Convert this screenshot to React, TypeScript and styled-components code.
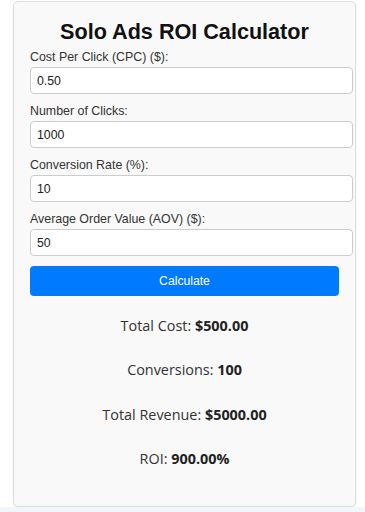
import { useState } from 'react';
import styled, { createGlobalStyle } from 'styled-components';

const GlobalStyle = createGlobalStyle`
    body {
        margin: 0;
        background-color: #f1f6fc;
    }
`;

const Page = styled.div`
    background-color: #ffffff;
    height: 507px;
    padding: 1px 9px 0 13px;
    box-sizing: border-box;
`;

const Card = styled.div`
    width: 343px;
    box-sizing: border-box;
    background-color: #f9f9f9;
    border: 1px solid #dddddd;
    border-radius: 5px;
    box-shadow: 0 1px 2px rgba(0, 0, 0, 0.08);
    padding: 17px 16px 37px;
`;

const Title = styled.h1`
    margin: 0 0 5px;
    font-family: 'Liberation Sans', Arial, sans-serif;
    font-size: 21.6px;
    line-height: 26px;
    font-weight: 700;
    color: #111;
    text-align: center;
`;

const Field = styled.div`
    display: flex;
    flex-direction: column;
    row-gap: 2px;
    margin-bottom: 10px;
`;

const Label = styled.label`
    font-family: 'Liberation Sans', Arial, sans-serif;
    font-size: 12.4px;
    line-height: 15px;
    color: #333;
`;

const Input = styled.input`
    box-sizing: content-box;
    width: 100%;
    height: 15px;
    padding: 5px 6px;
    margin: 0;
    border: 1px solid #cccccc;
    border-radius: 4px;
    background-color: #ffffff;
    font-family: 'Liberation Sans', Arial, sans-serif;
    font-size: 12.3px;
    color: #222;
    outline: none;
`;

const Button = styled.button`
    display: block;
    width: 100%;
    height: 30px;
    margin: 0;
    border: none;
    border-radius: 4px;
    background-color: #007bff;
    color: #ffffff;
    font-family: 'Liberation Sans', Arial, sans-serif;
    font-size: 12.2px;
    cursor: pointer;
`;

const Results = styled.div`
    display: flex;
    flex-direction: column;
    row-gap: 24.4px;
    margin-top: 20px;
`;

const ResultLine = styled.p`
    margin: 0;
    font-family: 'Open Sans', 'Noto Sans', sans-serif;
    font-size: 14.4px;
    line-height: 20px;
    color: #333;
    text-align: center;
`;

const Value = styled.strong`
    font-weight: 700;
    color: #222;
`;

const fields = [
    { key: 'cpc', label: 'Cost Per Click (CPC) ($):', initial: '0.50' },
    { key: 'clicks', label: 'Number of Clicks:', initial: '1000' },
    { key: 'rate', label: 'Conversion Rate (%):', initial: '10' },
    { key: 'aov', label: 'Average Order Value (AOV) ($):', initial: '50' },
];

const App = () => {
    const [values, setValues] = useState<Record<string, string>>(
        Object.fromEntries(fields.map((f) => [f.key, f.initial]))
    );

    const calc = (v: Record<string, string>) => {
        const cost = parseFloat(v.cpc) * parseFloat(v.clicks);
        const conversions = (parseFloat(v.clicks) * parseFloat(v.rate)) / 100;
        const revenue = conversions * parseFloat(v.aov);
        const roi = ((revenue - cost) / cost) * 100;
        return { cost, conversions, revenue, roi };
    };

    const [result, setResult] = useState(() => calc(values));

    return (
        <>
            <GlobalStyle />
            <Page>
                <Card>
                    <Title>Solo Ads ROI Calculator</Title>
                    {fields.map((f) => (
                        <Field key={f.key}>
                            <Label htmlFor={f.key}>{f.label}</Label>
                            <Input
                                id={f.key}
                                type="number"
                                value={values[f.key]}
                                onChange={(e) => setValues({ ...values, [f.key]: e.target.value })}
                            />
                        </Field>
                    ))}
                    <Button onClick={() => setResult(calc(values))}>Calculate</Button>
                    <Results>
                        <ResultLine>
                            Total Cost: <Value>${result.cost.toFixed(2)}</Value>
                        </ResultLine>
                        <ResultLine>
                            Conversions: <Value>{Math.round(result.conversions)}</Value>
                        </ResultLine>
                        <ResultLine>
                            Total Revenue: <Value>${result.revenue.toFixed(2)}</Value>
                        </ResultLine>
                        <ResultLine>
                            ROI: <Value>{result.roi.toFixed(2)}%</Value>
                        </ResultLine>
                    </Results>
                </Card>
            </Page>
        </>
    );
};

export default App;
